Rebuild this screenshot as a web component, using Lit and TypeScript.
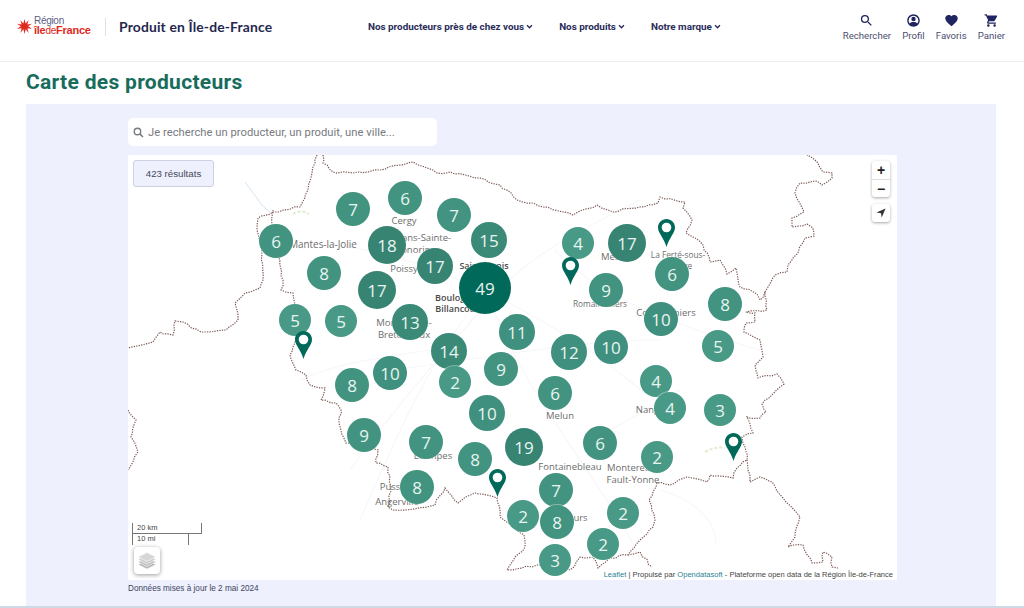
import { LitElement, html, css, svg } from "lit";
import { customElement } from "lit/decorators.js";

const OX = 128, OY = 155;
type P = [number, number];

const clusters: [number, number, number, number][] = [
  [6,405,198,17],[7,353,209,17],[7,454,215,17],[6,276,241,17],[18,387,245,19],[15,489,240,18],
  [4,578,243,16],[17,627,243,19],[17,435,266,18],[8,324,273,17],[6,672,274,17],[17,377,290,19],
  [49,485,288,26],[9,606,290,17],[8,725,304,17],[5,295,320,16],[5,341,321,16],[13,410,322,18],
  [10,661,319,17],[11,517,332,18],[5,718,346,16],[14,449,351,18],[12,569,352,18],[10,611,347,17],
  [9,501,369,17],[2,455,382,16],[10,390,373,17],[8,352,385,17],[4,656,381,16],[6,555,393,17],
  [4,670,408,16],[3,720,410,16],[10,487,413,18],[9,364,435,17],[7,426,442,17],[19,524,447,19],
  [6,600,443,17],[2,657,457,16],[8,475,459,17],[8,417,487,17],[7,556,490,17],[2,623,513,16],
  [2,523,516,16],[8,557,522,17],[2,603,544,16],[3,555,560,16],
];
const pins: P[] = [[666,219],[570,257],[303,331],[733,433],[497,469]];

const labels: [string, number, number, string?][] = [
  ["Cergy",404,220],["Mantes-la-Jolie",323,244,"m"],["Conflans-Sainte-",415,237],["Honorine",415,249],
  ["Poissy",404,268],["Saint-Denis",484,265,"b"],["Boulogne-",457,297,"b"],["Billancourt",459,308,"b"],
  ["Meaux",616,256],["La Ferté-sous-",678,254,"s"],["Jouarre",678,265,"s"],["Romainvilliers",600,303,"s"],
  ["Coulommiers",666,312],["Montigny-le-",404,322],["Bretonneux",404,334],["Melun",560,415],
  ["Nangis",651,409],["Étampes",433,455],["Fontainebleau",570,466],["Montereau-",633,467],
  ["Fault-Yonne",633,479],["Pussay",395,486],["Angerville",397,501],["Nemours",567,517],
];

const borders: P[][] = [
  [[323,155],[323,163],[333,172],[353,173],[380,170],[413,162],[437,173],[450,172],[480,178],[500,185],[517,200],[533,203],[543,207],[573,215],[597,205],[613,212],[640,207],[658,203],[660,197],[685,202],[683,208],[692,220],[686,233],[693,237],[703,245],[710,262],[720,260],[727,274],[736,268],[740,287],[757,294],[760,300],[765,292],[767,310],[747,312],[755,313],[755,322],[746,323],[744,332],[760,340],[763,357],[755,365],[758,378],[777,374],[784,384],[772,395],[762,404],[766,412],[760,418],[747,417],[753,433],[742,437],[745,447],[747,460],[737,468],[733,478],[710,475],[707,482],[687,477],[670,485],[657,483],[649,500],[655,520],[653,527],[640,540],[628,555],[610,558],[598,568],[593,557],[580,557],[570,570],[537,565],[507,570],[515,557],[525,547],[524,535],[508,523],[500,517],[497,498],[475,493],[458,503],[445,488],[435,505],[405,510],[393,510],[388,507],[391,487],[388,467],[376,463],[378,450],[346,443],[339,423],[341,410],[336,403],[321,400],[325,388],[310,385],[306,375],[296,370],[290,355],[293,347],[298,330],[293,293],[281,290],[283,280],[278,255],[272,225],[273,210]],
  [[317,155],[312,173],[308,190],[300,207],[273,212],[258,218],[257,230],[262,250],[263,280],[260,288],[245,293],[235,303],[238,320],[226,330],[201,332],[183,322],[175,321],[173,335],[160,332],[153,342],[128,348]],
  [[765,292],[775,275],[787,272],[788,265],[793,258],[798,253],[805,238],[814,236],[813,228],[807,224],[792,227],[792,218],[804,212],[795,193],[800,183],[817,181],[822,185],[832,178],[832,173],[823,172],[818,163],[807,155]],
  [[747,460],[748,470],[750,482],[760,477],[772,482],[783,498],[800,517],[795,537],[788,547],[803,545],[812,563],[823,562],[823,552],[832,557],[832,567],[838,568]],
  [[628,555],[640,552],[652,567]],
  [[128,410],[136,420],[131,437],[138,452],[128,470]],
];

const roads = [
  "M330 245 C395 250 470 280 540 320 S600 360 680 420",
  "M350 470 C400 400 455 340 490 300 S560 240 640 200",
  "M360 520 C395 440 420 380 470 310 M485 288 C520 380 555 420 600 490 S630 540 640 560",
  "M555 250 C600 300 690 330 760 350 M390 370 C480 360 570 340 660 340",
  "M660 490 C700 500 720 530 715 545 M300 380 C345 360 400 355 430 350 M610 430 C640 415 660 400 680 390",
];

function jag(pts: P[], seed: number): string {
  let s = seed;
  const r = () => { s = (s * 9301 + 49297) % 233280; return s / 233280 - 0.5; };
  const out: string[] = [];
  pts.forEach((p, i) => {
    if (i === 0) { out.push(`M${p[0]} ${p[1]}`); return; }
    const q = pts[i - 1];
    const n = Math.max(1, Math.round(Math.hypot(p[0] - q[0], p[1] - q[1]) / 5));
    for (let k = 1; k <= n; k++) {
      const t = k / n;
      const j = k === n ? 0 : 2.2;
      out.push(`L${(q[0] + (p[0] - q[0]) * t + r() * j).toFixed(1)} ${(q[1] + (p[1] - q[1]) * t + r() * j).toFixed(1)}`);
    }
  });
  return out.join("");
}

function clusterColor(n: number): string {
  if (n >= 40) return "#00695a";
  if (n >= 17) return "#388473";
  if (n >= 13) return "#3b8a78";
  if (n >= 10) return "#3f907e";
  if (n >= 6) return "#429481";
  return "#489a87";
}

const chevron = html`<svg class="chev" viewBox="0 0 10 10"><path d="M1.5 3.2 5 6.8 8.5 3.2" fill="none" stroke="currentColor" stroke-width="2"/></svg>`;

@customElement("app-root")
export class AppRoot extends LitElement {
  static styles = css`
    :host { display: block; width: 1024px; height: 608px; overflow: hidden; background: #fff; font-family: Roboto, "Noto Sans", sans-serif; color: #2a2c5a; }
    * { box-sizing: border-box; }
    header { height: 62px; display: flex; align-items: center; border-bottom: 1px solid #eeeeef; padding: 0 19px 8px 17px; }
    .logo { display: flex; align-items: center; gap: 2px; width: 74px; }
    .star { width: 15px; height: 15px; flex: none; }
    .logotext { display: flex; flex-direction: column; font-family: "Liberation Sans", sans-serif; line-height: 8.5px; margin-top: -1px; }
    .reg { font-size: 10px; color: #5b5f86; letter-spacing: -0.3px; }
    .idf { font-size: 11px; font-weight: 700; color: #e1291f; letter-spacing: -0.25px; white-space: nowrap; }
    .idf i { font-style: normal; font-weight: 400; font-size: 10px; }
    .sep { width: 1px; height: 18px; background: #dfdfe3; margin: 0 13px 0 14px; }
    .brand { font-family: Lato, sans-serif; font-weight: 700; font-size: 13.9px; color: #25274f; width: 249px; white-space: nowrap; letter-spacing: .15px; }
    nav { display: flex; gap: 26px; font-size: 9.9px; font-weight: 700; flex: 1; }
    nav span { display: inline-flex; align-items: center; gap: 2px; white-space: nowrap; }
    .chev { width: 7px; height: 7px; }
    .tools { display: flex; gap: 11.2px; }
    .tool { display: flex; flex-direction: column; align-items: center; gap: 2px; font-size: 9.6px; color: #4c4e70; white-space: nowrap; }
    .tool svg { width: 15px; height: 15px; fill: #1f2560; }
    main { padding: 0 28px 0 26px; }
    h1 { margin: 0; height: 42px; padding-bottom: 2px; display: flex; align-items: center; font-family: Roboto, sans-serif; font-size: 21px; font-weight: 700; color: #176c5b; letter-spacing: .3px; }
    .panel { height: 502px; background: #eef0fd; padding: 14px 99px 0 102px; }
    .search { width: 309px; height: 28px; background: #fff; border-radius: 5px; display: flex; align-items: center; gap: 4px; padding-left: 5px; font-size: 11.2px; color: #777a80; letter-spacing: .03px; }
    .search svg { width: 11px; height: 11px; flex: none; }
    .map { position: relative; margin-top: 9px; width: 769px; height: 425px; background: #fff; overflow: hidden; }
    .canvas { position: absolute; inset: 0; width: 769px; height: 425px; }
    .lbl { position: absolute; transform: translate(-50%, -50%); font-family: "Open Sans", sans-serif; font-size: 9.5px; color: #6d6d6d; white-space: nowrap; }
    .lbl.m { font-size: 9.9px; }
    .lbl.s { font-size: 8.3px; }
    .lbl.b { font-weight: 600; font-size: 9px; color: #4a4a4a; }
    .cl { position: absolute; border-radius: 50%; display: flex; align-items: center; justify-content: center; color: #e8f5f0; font-family: "Open Sans", sans-serif; font-size: 17px; box-shadow: 0 0 0 1px rgba(255,255,255,.35); }
    .pin { position: absolute; width: 17px; height: 28px; }
    .count { position: absolute; left: 5px; top: 5px; width: 81px; height: 27px; background: #eef0fd; border: 1px solid #cdd0e2; border-radius: 3px; display: flex; align-items: center; justify-content: center; font: 9.7px "Liberation Sans", sans-serif; color: #454a5c; }
    .zoom { position: absolute; left: 744px; top: 6px; width: 18px; background: #fff; border-radius: 3px; box-shadow: 0 1px 3px rgba(0,0,0,.35); }
    .zoom div { height: 18px; display: flex; align-items: center; justify-content: center; font: 700 14px "Liberation Sans", sans-serif; color: #222; }
    .zoom div + div { border-top: 1px solid #ddd; }
    .loc { position: absolute; left: 744px; top: 49px; width: 18px; height: 18px; background: #fff; border-radius: 3px; box-shadow: 0 1px 3px rgba(0,0,0,.35); display: flex; align-items: center; justify-content: center; }
    .loc svg { width: 10px; height: 10px; }
    .scale { position: absolute; left: 4px; top: 368px; width: 70px; height: 22px; font: 7.5px "Liberation Sans", sans-serif; color: #444; }
    .scale div { position: absolute; left: 0; padding-left: 4px; }
    .s1 { top: 0; width: 70px; height: 11px; border: 1.5px solid #777; border-top: 0; line-height: 10px; }
    .s2 { top: 10px; width: 57px; height: 12px; border: 1.5px solid #777; border-top: 0; border-bottom: 0; line-height: 12px; }
    .layers { position: absolute; left: 6px; top: 392px; width: 26px; height: 27px; background: #fff; border-radius: 4px; box-shadow: 0 1px 4px rgba(0,0,0,.4); display: flex; align-items: center; justify-content: center; }
    .layers svg { width: 20px; height: 20px; }
    .attr { position: absolute; right: 0; bottom: 0; padding: 0 4px 1px; font: 7.55px "Liberation Sans", sans-serif; color: #444; background: rgba(255,255,255,.7); white-space: nowrap; }
    .attr a { color: #2a7f96; }
    .caption { margin-top: 3px; font: 8.2px "Liberation Sans", sans-serif; color: #404560; height: 12px; line-height: 12px; }
    .strip { height: 2px; background: #cfd9e6; }
  `;

  render() {
    return html`
      <header>
        <div class="logo">
          <svg class="star" viewBox="0 0 20 20"><polygon fill="#e1291f" points="10,0 11.5,6 15.5,1.5 13.8,7.2 20,6.2 14.8,9.6 20,13 13.8,12.2 15.5,18.5 11.5,13.5 10,20 8.5,13.5 4.5,18.5 6.2,12.2 0,13 5.2,9.6 0,6.2 6.2,7.2 4.5,1.5 8.5,6"/></svg>
          <div class="logotext"><span class="reg">Région</span><span class="idf">île<i>de</i>France</span></div>
        </div>
        <div class="sep"></div>
        <div class="brand">Produit en Île-de-France</div>
        <nav>
          <span>Nos producteurs près de chez vous ${chevron}</span>
          <span>Nos produits ${chevron}</span>
          <span>Notre marque ${chevron}</span>
        </nav>
        <div class="tools">
          <div class="tool"><svg viewBox="0 0 24 24"><path d="M15.5 14h-.79l-.28-.27A6.47 6.47 0 0 0 16 9.5 6.5 6.5 0 1 0 9.5 16c1.61 0 3.09-.59 4.23-1.57l.27.28v.79l5 4.99L20.49 19l-4.99-5zm-6 0C7.01 14 5 11.99 5 9.5S7.01 5 9.5 5 14 7.01 14 9.5 11.99 14 9.5 14z"/></svg>Rechercher</div>
          <div class="tool"><svg viewBox="0 0 24 24"><path fill-rule="evenodd" d="M12 2C6.48 2 2 6.48 2 12s4.48 10 10 10 10-4.48 10-10S17.52 2 12 2zm0 2.2a7.8 7.8 0 0 1 6.2 12.5c-1.7-1.6-4-2.2-6.2-2.2s-4.5.6-6.2 2.2A7.8 7.8 0 0 1 12 4.200zM12 6a3.500 3.500 0 1 0 0 7 3.500 3.500 0 0 0 0-7z"/></svg>Profil</div>
          <div class="tool"><svg viewBox="0 0 24 24"><path d="M12 21.35l-1.45-1.32C5.4 15.36 2 12.28 2 8.5 2 5.42 4.42 3 7.5 3c1.74 0 3.41.81 4.5 2.09C13.09 3.81 14.76 3 16.5 3 19.58 3 22 5.42 22 8.5c0 3.78-3.4 6.86-8.55 11.54L12 21.35z"/></svg>Favoris</div>
          <div class="tool"><svg viewBox="0 0 24 24"><path d="M7 18c-1.1 0-1.99.9-1.99 2S5.9 22 7 22s2-.9 2-2-.9-2-2-2zM1 2v2h2l3.6 7.59-1.35 2.45c-.16.28-.25.61-.25.96 0 1.1.9 2 2 2h12v-2H7.42a.25.25 0 0 1-.25-.25l.03-.12L8.1 13h7.45c.75 0 1.41-.41 1.75-1.03l3.58-6.49A1 1 0 0 0 20 4H5.21l-.94-2H1zm16 16c-1.1 0-1.99.9-1.99 2s.89 2 1.99 2 2-.9 2-2-.9-2-2-2z"/></svg>Panier</div>
        </div>
      </header>
      <main>
        <h1>Carte des producteurs</h1>
        <div class="panel">
          <div class="search">
            <svg viewBox="0 0 16 16"><circle cx="6.5" cy="6.5" r="4.7" fill="none" stroke="#777a80" stroke-width="2"/><path d="M10 10l4.5 4.5" stroke="#777a80" stroke-width="2.2"/></svg>
            Je recherche un producteur, un produit, une ville...
          </div>
          <div class="map">
            <svg class="canvas" viewBox="${OX} ${OY} 769 425">
              ${roads.map((d) => svg`<path d=${d} fill="none" stroke="#f7f7fa" stroke-width="1.2"/>`)}
              <path d="M245 182 L262 205 L270 212" fill="none" stroke="#d5e5f0" stroke-width="1"/>
              <path d="M293 214 q8 -5 16 0 M705 452 q10 -6 20 -4" fill="none" stroke="#dfeccd" stroke-width="2" stroke-dasharray="3 2"/>
              ${borders.map((b, i) => svg`<path d=${jag(b, 17 + i * 31)} fill="none" stroke="#7d5a56" stroke-width="1.2" stroke-dasharray="1.3 1.2"/>`)}
            </svg>
            ${labels.map(([t, x, y, k]) => html`<div class="lbl ${k ?? ""}" style="left:${x - OX}px;top:${y - OY}px">${t}</div>`)}
            ${clusters.map(([n, x, y, r]) => html`<div class="cl" style="left:${x - OX - r}px;top:${y - OY - r}px;width:${r * 2}px;height:${r * 2}px;background:${clusterColor(n)}">${n}</div>`)}
            ${pins.map(([x, y]) => html`<svg class="pin" style="left:${x - OX - 8.5}px;top:${y - OY}px" viewBox="0 0 17 28"><path fill="#00695a" d="M8.5 0C3.8 0 0 3.8 0 8.5 0 14 5.5 18 8.5 28 11.5 18 17 14 17 8.5 17 3.8 13.2 0 8.5 0z"/><circle cx="8.5" cy="8.5" r="4.8" fill="#fff"/></svg>`)}
            <div class="count">423 résultats</div>
            <div class="zoom"><div>+</div><div>−</div></div>
            <div class="loc"><svg viewBox="0 0 12 12"><path fill="#333" d="M11.500 .5 .5 5.500 6 6.200 6.800 11.500z"/></svg></div>
            <div class="scale"><div class="s1">20 km</div><div class="s2">10 mi</div></div>
            <div class="layers"><svg viewBox="0 0 20 20"><g stroke="#fff" stroke-width=".6"><path fill="#b5b5b5" d="M10 9 19 13.500 10 18 1 13.500z"/><path fill="#c0c0c0" d="M10 6.500 19 11 10 15.500 1 11z"/><path fill="#cbcbcb" d="M10 4 19 8.500 10 13 1 8.500z"/><path fill="#d6d6d6" d="M10 1.500 19 6 10 10.500 1 6z"/></g></svg></div>
            <div class="attr"><a>Leaflet</a> | Propulsé par <a>Opendatasoft</a> - Plateforme open data de la Région Île-de-France</div>
          </div>
          <div class="caption">Données mises à jour le 2 mai 2024</div>
        </div>
      </main>
      <div class="strip"></div>
    `;
  }
}
